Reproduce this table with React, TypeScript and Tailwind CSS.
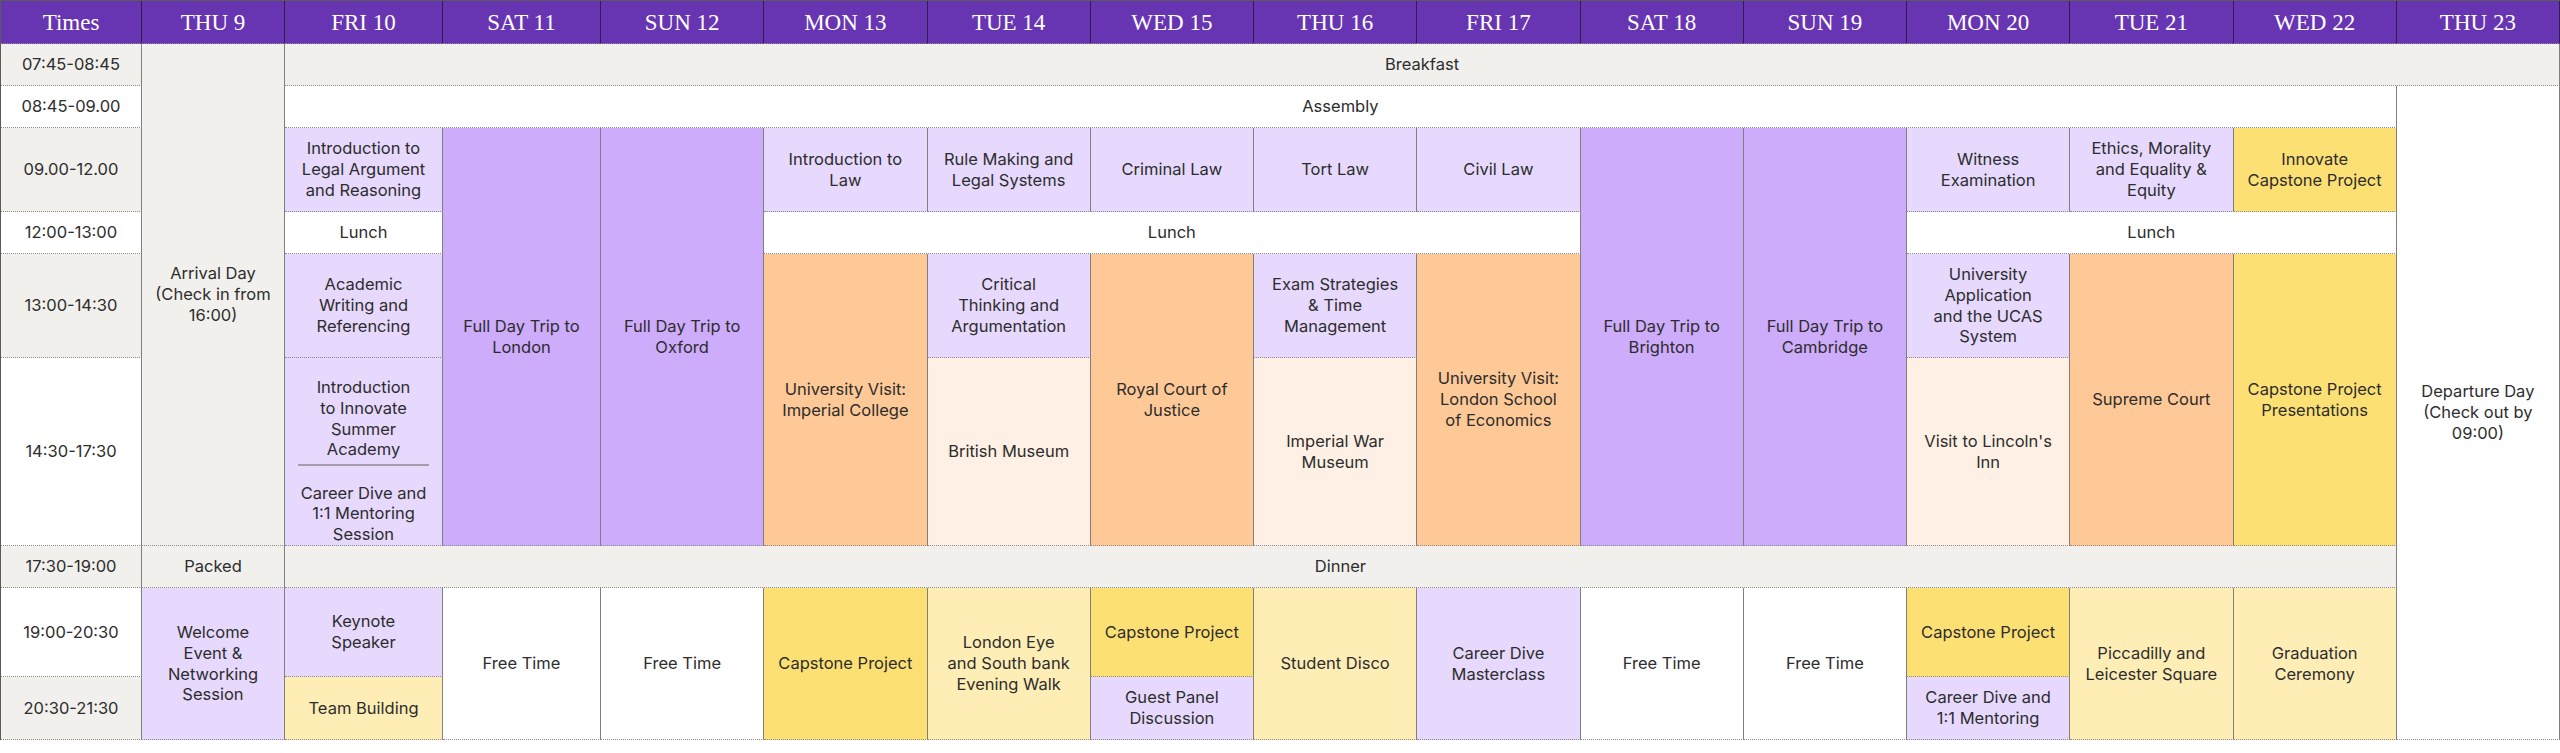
import React from 'react'

/* palette */
const GREY = 'bg-[#f1f0ec]'
const WHITE = 'bg-white'
const LAV = 'bg-[#e6d9fd]'
const PURPLE = 'bg-[#cdacfc]'
const ORANGE = 'bg-[#fec996]'
const PEACH = 'bg-[#fef0e4]'
const YELLOW = 'bg-[#fde074]'
const CREAM = 'bg-[#feeeb5]'

type Slot = { at: string; bg: string; text: string[] }

const days: [string, string][] = [
  ['Times', 'col-start-1'],
  ['THU 9', 'col-start-2'],
  ['FRI 10', 'col-start-3'],
  ['SAT 11', 'col-start-4'],
  ['SUN 12', 'col-start-5'],
  ['MON 13', 'col-start-6'],
  ['TUE 14', 'col-start-7'],
  ['WED 15', 'col-start-8'],
  ['THU 16', 'col-start-9'],
  ['FRI 17', 'col-start-10'],
  ['SAT 18', 'col-start-11'],
  ['SUN 19', 'col-start-12'],
  ['MON 20', 'col-start-13'],
  ['TUE 21', 'col-start-14'],
  ['WED 22', 'col-start-15'],
  ['THU 23', 'col-start-16'],
]

const slots: Slot[] = [
  // times
  { at: 'col-start-1 row-start-2', bg: GREY, text: ['07:45-08:45'] },
  { at: 'col-start-1 row-start-3', bg: WHITE, text: ['08:45-09.00'] },
  { at: 'col-start-1 row-start-4', bg: GREY, text: ['09.00-12.00'] },
  { at: 'col-start-1 row-start-5', bg: WHITE, text: ['12:00-13:00'] },
  { at: 'col-start-1 row-start-6', bg: GREY, text: ['13:00-14:30'] },
  { at: 'col-start-1 row-start-7', bg: WHITE, text: ['14:30-17:30'] },
  { at: 'col-start-1 row-start-8', bg: GREY, text: ['17:30-19:00'] },
  { at: 'col-start-1 row-start-9', bg: WHITE, text: ['19:00-20:30'] },
  { at: 'col-start-1 row-start-10', bg: GREY, text: ['20:30-21:30'] },

  // thu 9
  { at: 'col-start-2 row-start-2 row-span-6', bg: GREY, text: ['Arrival Day', '(Check in from', '16:00)'] },
  { at: 'col-start-2 row-start-8', bg: GREY, text: ['Packed'] },
  { at: 'col-start-2 row-start-9 row-span-2', bg: LAV, text: ['Welcome', 'Event &', 'Networking', 'Session'] },

  // shared rows
  { at: 'col-start-3 col-span-14 row-start-2', bg: GREY, text: ['Breakfast'] },
  { at: 'col-start-3 col-span-13 row-start-3', bg: WHITE, text: ['Assembly'] },
  { at: 'col-start-16 row-start-3 row-span-8', bg: WHITE, text: ['Departure Day', '(Check out by', '09:00)'] },

  // 09.00-12.00
  { at: 'col-start-3 row-start-4', bg: LAV, text: ['Introduction to', 'Legal Argument', 'and Reasoning'] },
  { at: 'col-start-4 row-start-4 row-span-4', bg: PURPLE, text: ['Full Day Trip to', 'London'] },
  { at: 'col-start-5 row-start-4 row-span-4', bg: PURPLE, text: ['Full Day Trip to', 'Oxford'] },
  { at: 'col-start-6 row-start-4', bg: LAV, text: ['Introduction to', 'Law'] },
  { at: 'col-start-7 row-start-4', bg: LAV, text: ['Rule Making and', 'Legal Systems'] },
  { at: 'col-start-8 row-start-4', bg: LAV, text: ['Criminal Law'] },
  { at: 'col-start-9 row-start-4', bg: LAV, text: ['Tort Law'] },
  { at: 'col-start-10 row-start-4', bg: LAV, text: ['Civil Law'] },
  { at: 'col-start-11 row-start-4 row-span-4', bg: PURPLE, text: ['Full Day Trip to', 'Brighton'] },
  { at: 'col-start-12 row-start-4 row-span-4', bg: PURPLE, text: ['Full Day Trip to', 'Cambridge'] },
  { at: 'col-start-13 row-start-4', bg: LAV, text: ['Witness', 'Examination'] },
  { at: 'col-start-14 row-start-4', bg: LAV, text: ['Ethics, Morality', 'and Equality &', 'Equity'] },
  { at: 'col-start-15 row-start-4', bg: YELLOW, text: ['Innovate', 'Capstone Project'] },

  // lunch
  { at: 'col-start-3 row-start-5', bg: WHITE, text: ['Lunch'] },
  { at: 'col-start-6 col-span-5 row-start-5', bg: WHITE, text: ['Lunch'] },
  { at: 'col-start-13 col-span-3 row-start-5', bg: WHITE, text: ['Lunch'] },

  // 13:00-14:30
  { at: 'col-start-3 row-start-6', bg: LAV, text: ['Academic', 'Writing and', 'Referencing'] },
  { at: 'col-start-6 row-start-6 row-span-2', bg: ORANGE, text: ['University Visit:', 'Imperial College'] },
  { at: 'col-start-7 row-start-6', bg: LAV, text: ['Critical', 'Thinking and', 'Argumentation'] },
  { at: 'col-start-8 row-start-6 row-span-2', bg: ORANGE, text: ['Royal Court of', 'Justice'] },
  { at: 'col-start-9 row-start-6', bg: LAV, text: ['Exam Strategies', '& Time', 'Management'] },
  { at: 'col-start-10 row-start-6 row-span-2', bg: ORANGE, text: ['University Visit:', 'London School', 'of Economics'] },
  { at: 'col-start-13 row-start-6', bg: LAV, text: ['University', 'Application', 'and the UCAS', 'System'] },
  { at: 'col-start-14 row-start-6 row-span-2', bg: ORANGE, text: ['Supreme Court'] },
  { at: 'col-start-15 row-start-6 row-span-2', bg: YELLOW, text: ['Capstone Project', 'Presentations'] },

  // 14:30-17:30
  { at: 'col-start-7 row-start-7', bg: PEACH, text: ['British Museum'] },
  { at: 'col-start-9 row-start-7', bg: PEACH, text: ['Imperial War', 'Museum'] },
  { at: 'col-start-13 row-start-7', bg: PEACH, text: ["Visit to Lincoln's", 'Inn'] },

  // dinner
  { at: 'col-start-3 col-span-13 row-start-8', bg: GREY, text: ['Dinner'] },

  // evenings
  { at: 'col-start-3 row-start-9', bg: LAV, text: ['Keynote', 'Speaker'] },
  { at: 'col-start-3 row-start-10', bg: CREAM, text: ['Team Building'] },
  { at: 'col-start-4 row-start-9 row-span-2', bg: WHITE, text: ['Free Time'] },
  { at: 'col-start-5 row-start-9 row-span-2', bg: WHITE, text: ['Free Time'] },
  { at: 'col-start-6 row-start-9 row-span-2', bg: YELLOW, text: ['Capstone Project'] },
  { at: 'col-start-7 row-start-9 row-span-2', bg: CREAM, text: ['London Eye', 'and South bank', 'Evening Walk'] },
  { at: 'col-start-8 row-start-9', bg: YELLOW, text: ['Capstone Project'] },
  { at: 'col-start-8 row-start-10', bg: LAV, text: ['Guest Panel', 'Discussion'] },
  { at: 'col-start-9 row-start-9 row-span-2', bg: CREAM, text: ['Student Disco'] },
  { at: 'col-start-10 row-start-9 row-span-2', bg: LAV, text: ['Career Dive', 'Masterclass'] },
  { at: 'col-start-11 row-start-9 row-span-2', bg: WHITE, text: ['Free Time'] },
  { at: 'col-start-12 row-start-9 row-span-2', bg: WHITE, text: ['Free Time'] },
  { at: 'col-start-13 row-start-9', bg: YELLOW, text: ['Capstone Project'] },
  { at: 'col-start-13 row-start-10', bg: LAV, text: ['Career Dive and', '1:1 Mentoring'] },
  { at: 'col-start-14 row-start-9 row-span-2', bg: CREAM, text: ['Piccadilly and', 'Leicester Square'] },
  { at: 'col-start-15 row-start-9 row-span-2', bg: CREAM, text: ['Graduation', 'Ceremony'] },
]

const edge = 'border-r border-b border-[#7f7f7f] border-b-[#8c8c8c] ![border-bottom-style:dotted]'

const Lines = ({ text }: { text: string[] }) => (
  <p className="whitespace-nowrap">
    {text.map((t, i) => (
      <React.Fragment key={i}>
        {i > 0 && <br />}
        {t}
      </React.Fragment>
    ))}
  </p>
)

const Cell = ({ at, bg, text }: Slot) => (
  <div className={`${at} ${bg} ${edge} flex items-center justify-center text-center px-1`}>
    <Lines text={text} />
  </div>
)

export default function App() {
  return (
    <div className="w-[2560px] min-h-[753px] bg-white font-[Inter,sans-serif] text-[16.5px] leading-[20.8px] text-[#2d2d2d]">
      <div className="grid border-l border-t border-[#5a5a5a] grid-cols-[141px_143px_158px_158px_repeat(12,minmax(0,1fr))] grid-rows-[43px_42px_42px_84px_42px_104px_188px_42px_89px_63px]">
        {days.map(([label, col]) => (
          <div
            key={label}
            className={`${col} row-start-1 bg-[#6734b2] text-white font-['Liberation_Serif',serif] text-[23px] pt-[2px] flex items-center justify-center border-r border-b border-[#2e1d4d] border-b-[#8c8c8c] ![border-bottom-style:dotted]`}
          >
            {label}
          </div>
        ))}

        {slots.map((s, i) => (
          <Cell key={i} {...s} />
        ))}

        {/* FRI 10 afternoon holds two sessions */}
        <div className={`col-start-3 row-start-7 ${LAV} ${edge} flex flex-col items-center text-center`}>
          <div className="pt-[19px]">
            <Lines text={['Introduction', 'to Innovate', 'Summer', 'Academy']} />
          </div>
          <div className="self-stretch mx-[13px] mt-[4px] h-[2px] bg-[#a39dae]" />
          <div className="pt-[17px]">
            <Lines text={['Career Dive and', '1:1 Mentoring', 'Session']} />
          </div>
        </div>
      </div>
    </div>
  )
}
